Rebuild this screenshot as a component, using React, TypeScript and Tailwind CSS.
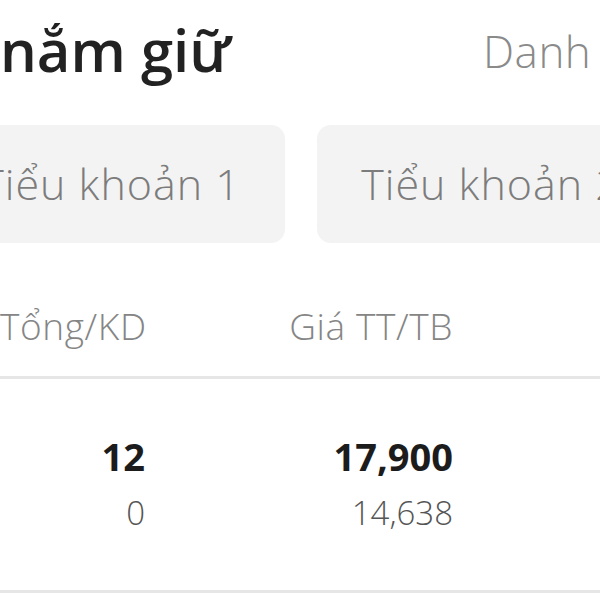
import React from "react";

const columns = [
	{ label: "Tổng/KD", width: "w-[145px]" },
	{ label: "Giá TT/TB", width: "w-[308px]" },
];

const rows = [{ top: ["12", "17,900"], bottom: ["0", "14,638"] }];

export default function App() {
	return (
		<div
			className="w-[600px] h-[600px] overflow-hidden bg-white"
			style={{ fontFamily: "'Open Sans', 'Noto Sans', sans-serif" }}>
			<div className="flex h-[100px] whitespace-nowrap">
				<div className="w-[483px] text-[58px] leading-[100px] font-semibold text-[#222222]">
					nắm giữ
				</div>
				<div className="text-[44px] leading-[102px] font-light tracking-[0.5px] text-[#8a8a8a]">
					Danh
				</div>
			</div>

			<div className="flex gap-[32px] -ml-[63px] mt-[25px] whitespace-nowrap">
				<div className="w-[348px] h-[118px] shrink-0 rounded-[14px] bg-[#f3f3f3] flex items-center justify-center text-[43px] font-light tracking-[1px] text-[#7c7c7c]">
					Tiểu khoản 1
				</div>
				<div className="w-[348px] h-[118px] shrink-0 rounded-[14px] bg-[#f3f3f3] flex items-center justify-center text-[43px] font-light tracking-[1px] text-[#7c7c7c]">
					Tiểu khoản 2
				</div>
			</div>

			<div className="flex pt-[48px] pb-[15px] text-[37px] leading-[70px] font-light tracking-[0.6px] text-[#858585]">
				{columns.map((c) => (
					<div key={c.label} className={`${c.width} text-right whitespace-nowrap`}>
						{c.label}
					</div>
				))}
			</div>
			<div className="h-[3px] bg-[#e6e6e6]" />

			{rows.map((r, i) => (
				<div key={i} className="pt-[48px] pb-[49px]">
					<div className="flex text-[38px] leading-[58px] font-bold text-[#1c1c1c]">
						{r.top.map((v, j) => (
							<div key={j} className={`${columns[j].width} text-right`}>
								{v}
							</div>
						))}
					</div>
					<div className="flex text-[33px] leading-[56px] font-light text-[#555555]">
						{r.bottom.map((v, j) => (
							<div key={j} className={`${columns[j].width} text-right`}>
								{v}
							</div>
						))}
					</div>
				</div>
			))}
			<div className="h-[3px] bg-[#e6e6e6]" />
		</div>
	);
}
